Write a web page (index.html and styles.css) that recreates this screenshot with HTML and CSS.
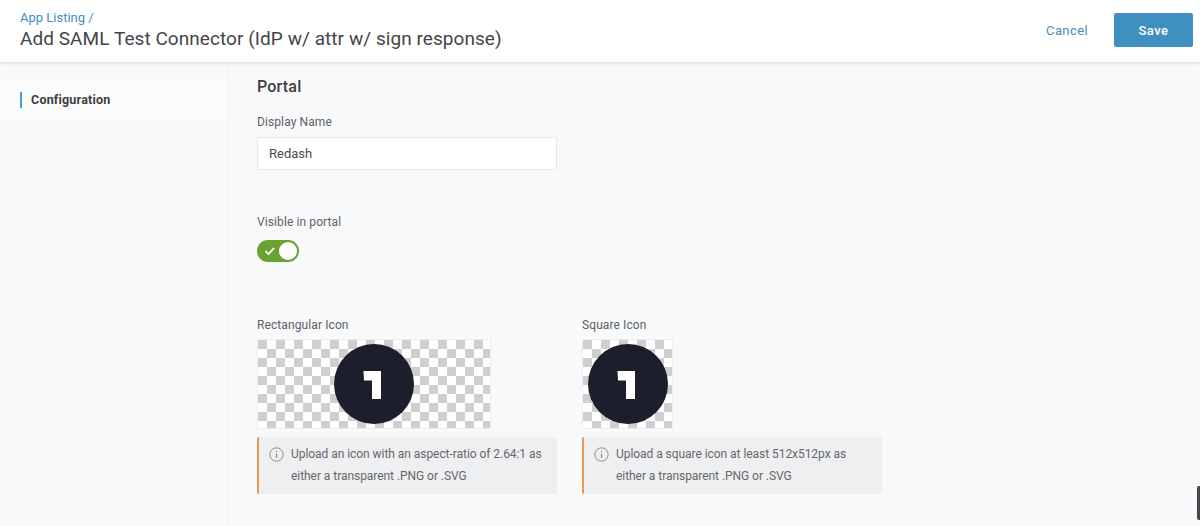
FILE: index.html
```html
<!DOCTYPE html>
<html lang="en">
<head>
<meta charset="utf-8">
<title>Add SAML Test Connector</title>
<link rel="stylesheet" href="styles.css">
</head>
<body>
<header class="topbar">
  <div class="heading">
    <a class="crumb">App Listing /</a>
    <h1 class="title">Add SAML Test Connector (IdP w/ attr w/ sign response)</h1>
  </div>
  <div class="actions">
    <button class="btn-cancel">Cancel</button>
    <button class="btn-save">Save</button>
  </div>
</header>
<div class="layout">
  <aside class="sidebar">
    <div class="nav-item"><span class="nav-label">Configuration</span></div>
  </aside>
  <main class="content">
    <h2 class="section-title">Portal</h2>
    <label class="field-label">Display Name</label>
    <div class="text-input">Redash</div>
    <div class="field-label visible-label">Visible in portal</div>
    <div class="toggle">
      <svg class="toggle-check" width="12" height="10" viewBox="0 0 12 10"><path d="M1.5 5.2L4.4 8L10.2 1.8" fill="none" stroke="#fff" stroke-width="1.7"/></svg>
      <span class="toggle-knob"></span>
    </div>
    <div class="icons">
      <section class="icon-col">
        <div class="field-label">Rectangular Icon</div>
        <div class="preview preview-rect">
          <svg class="logo" width="80" height="80" viewBox="0 0 80 80"><circle cx="40" cy="40" r="40" fill="#1c1f2b"/><path d="M29.5 27H47V55H38V36.5H30Z" fill="#fff"/></svg>
        </div>
        <div class="note">
          <svg class="note-icon" width="15" height="15" viewBox="0 0 15 15"><circle cx="7.5" cy="7.5" r="6.7" fill="none" stroke="#8d8e92" stroke-width="1"/><path d="M7.5 6.6V11" stroke="#8d8e92" stroke-width="1.2"/><circle cx="7.5" cy="4.5" r=".8" fill="#8d8e92"/></svg>
          <p class="note-text">Upload an icon with an aspect-ratio of 2.64:1 as either a transparent .PNG or .SVG</p>
        </div>
      </section>
      <section class="icon-col">
        <div class="field-label">Square Icon</div>
        <div class="preview preview-square">
          <svg class="logo" width="80" height="80" viewBox="0 0 80 80"><circle cx="40" cy="40" r="40" fill="#1c1f2b"/><path d="M29.5 27H47V55H38V36.5H30Z" fill="#fff"/></svg>
        </div>
        <div class="note">
          <svg class="note-icon" width="15" height="15" viewBox="0 0 15 15"><circle cx="7.5" cy="7.5" r="6.7" fill="none" stroke="#8d8e92" stroke-width="1"/><path d="M7.5 6.6V11" stroke="#8d8e92" stroke-width="1.2"/><circle cx="7.5" cy="4.5" r=".8" fill="#8d8e92"/></svg>
          <p class="note-text">Upload a square icon at least 512x512px as either a transparent .PNG or .SVG</p>
        </div>
      </section>
    </div>
  </main>
</div>
<div class="scroll-thumb"></div>
</body>
</html>
```
FILE: styles.css
```css
* { box-sizing: border-box; }
html, body { margin: 0; height: 100%; overflow: hidden; }
body {
  width: 1200px;
  height: 526px;
  background: #f8f9fb;
  font-family: Roboto, "Liberation Sans", sans-serif;
  color: #55565a;
  display: flex;
  flex-direction: column;
}
.topbar {
  position: relative;
  z-index: 2;
  height: 62px;
  flex: none;
  background: #fff;
  box-shadow: 0 1px 4px rgba(60, 64, 80, .16);
  display: flex;
  align-items: flex-start;
  justify-content: space-between;
  padding: 10px 7px 0 20px;
}
.crumb { display: block; font-size: 13px; line-height: 15px; letter-spacing: 0; color: #3f8fbf; }
.title { margin: 2px 0 0; font-size: 19px; line-height: 24px; font-weight: 400; letter-spacing: .06px; color: #444549; }
.actions { display: flex; align-items: center; gap: 26px; padding-top: 3px; }
.btn-cancel, .btn-save { font: 500 13px/15px Roboto, sans-serif; border: 0; padding: 0; }
.btn-cancel { background: none; color: #4a8bb3; font-weight: 400; letter-spacing: .4px; }
.btn-save { width: 79px; height: 34px; border-radius: 2px; background: #3f90c0; color: #fff; letter-spacing: .5px; }
.layout { flex: 1; display: flex; min-height: 0; }
.sidebar { width: 229px; flex: none; padding-top: 18px; border-right: 1px solid #f0f1f3; }
.nav-item { height: 40px; background: #fafbfb; padding: 12px 0 0 20px; }
.nav-label {
  display: block;
  border-left: 2px solid #4d9bd0;
  padding-left: 9px;
  font-size: 12.5px;
  line-height: 16px;
  font-weight: 700;
  letter-spacing: .2px;
  color: #3d3e42;
}
.content { flex: 1; padding: 15px 0 0 28px; }
.section-title { margin: 0; font-size: 16px; line-height: 20px; font-weight: 500; letter-spacing: .2px; color: #3d3e42; }
.field-label { display: block; font-size: 12px; line-height: 14px; letter-spacing: .1px; color: #606165; }
.section-title + .field-label { margin-top: 18px; }
.text-input {
  width: 300px;
  height: 33px;
  margin-top: 8px;
  padding: 0 11px;
  background: #fff;
  border: 1px solid #e6e7ea;
  border-radius: 2px;
  font-size: 13px;
  line-height: 31px;
  letter-spacing: 0;
  color: #4a4b4f;
}
.visible-label { margin-top: 45px; }
.toggle {
  position: relative;
  width: 42px;
  height: 22px;
  margin-top: 11px;
  border-radius: 11px;
  background: #6aa232;
}
.toggle-check { position: absolute; left: 7px; top: 6px; }
.toggle-knob { position: absolute; right: 2px; top: 2px; width: 18px; height: 18px; border-radius: 50%; background: #fff; }
.icons { display: flex; gap: 24px; margin-top: 56px; }
.icon-col { width: 301px; }
.preview {
  position: relative;
  height: 90px;
  margin-top: 7px;
  display: flex;
  align-items: center;
  justify-content: center;
  background-color: #fff;
  background-image: conic-gradient(#cfcfcf 25%, #fff 0 50%, #cfcfcf 0 75%, #fff 0);
  background-size: 18px 18px;
  background-position: 9px 0;
  border: 1px solid #eceef0;
}
.preview-rect { width: 234px; }
.preview-square { width: 91px; }
.note {
  display: flex;
  gap: 7px;
  width: 300px;
  height: 57px;
  margin-top: 8px;
  padding: 6px 10px 0 10px;
  background: #eeeff1;
  border-left: 2px solid #f0964a;
  border-radius: 2px;
}
.note-icon { flex: none; margin-top: 4px; }
.note-text { margin: 0; font-size: 12px; line-height: 22px; letter-spacing: -.05px; color: #66676b; }
.scroll-thumb {
  position: absolute;
  right: 0;
  top: 486px;
  width: 3px;
  height: 34px;
  border-radius: 2px 0 0 2px;
  background: #45464b;
}
```
